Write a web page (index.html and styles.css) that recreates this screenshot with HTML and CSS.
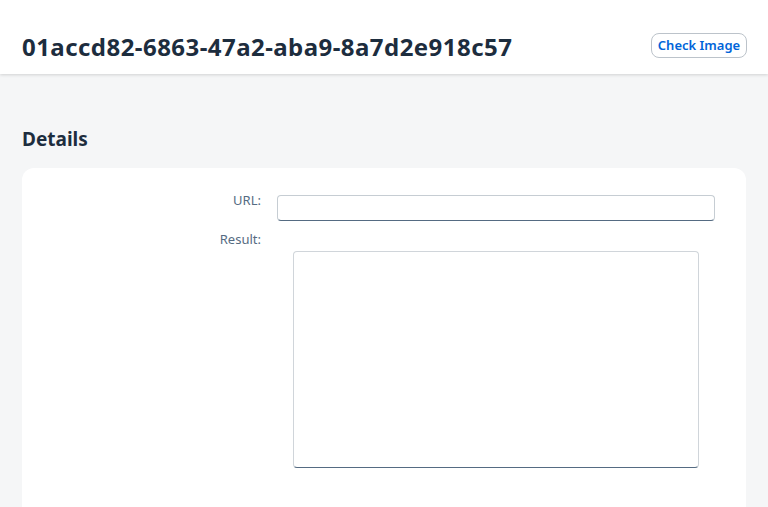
FILE: index.html
```html
<!DOCTYPE html>
<html>
<head>
<meta charset="utf-8">
<link rel="stylesheet" href="styles.css">
</head>
<body>
<header class="header">
  <h1 class="title">01accd82-6863-47a2-aba9-8a7d2e918c57</h1>
  <button class="btn">Check Image</button>
</header>
<main class="content">
  <h2 class="section-title">Details</h2>
  <section class="card">
    <div class="row">
      <label class="label">URL:</label>
      <input class="input" type="text">
    </div>
    <div class="row">
      <label class="label">Result:</label>
      <div class="result-wrap"><textarea class="result"></textarea></div>
    </div>
  </section>
</main>
</body>
</html>
```
FILE: styles.css
```css
* { box-sizing: border-box; }
html, body { margin: 0; padding: 0; }
body {
  background: #f5f6f7;
  font-family: "Noto Sans", "Liberation Sans", sans-serif;
  color: #1d2d3e;
  height: 507px;
  overflow: hidden;
}
.header {
  background: #fff;
  height: 74px;
  display: flex;
  align-items: center;
  justify-content: space-between;
  padding: 19px 21px 0 22px;
  box-shadow: 0 1px 3px rgba(0,0,0,0.15);
  position: relative;
}
.title {
  margin: 0;
  font-size: 24px;
  letter-spacing: 0.45px;
  font-weight: 700;
  color: #1d2d3e;
  line-height: 30px;
}
.btn {
  height: 25px;
  width: 96px;
  border: 1px solid #bcc3ca;
  border-radius: 8px;
  background: #fff;
  color: #0064d9;
  font-family: "Noto Sans", sans-serif;
  font-weight: 600;
  font-size: 13px;
  padding: 0;
  margin-top: -3px;
}
.content {
  padding: 52px 22px 0 22px;
}
.section-title {
  margin: 0 0 16px 0;
  font-size: 19px;
  font-weight: 700;
  line-height: 26px;
}
.card {
  background: #fff;
  border-radius: 12px;
  padding: 27px 31px 0 0;
  height: 380px;
}
.row {
  display: flex;
  align-items: flex-start;
  margin-bottom: 13px;
}
.label {
  width: 239px;
  text-align: right;
  font-size: 13px;
  color: #556b82;
  margin-right: 16px;
  line-height: 11px;
}
.input {
  flex: 1;
  height: 26px;
  border: 1px solid #c6cdd3;
  border-bottom-color: #556b82;
  border-radius: 4px;
  background: #fff;
  outline: none;
}
.result-wrap {
  padding: 17px 0 0 16px;
}
.result {
  display: block;
  width: 406px;
  height: 217px;
  border: 1px solid #d0d5da;
  border-bottom-color: #556b82;
  border-radius: 4px;
  resize: none;
  background: #fff;
  outline: none;
}
```
